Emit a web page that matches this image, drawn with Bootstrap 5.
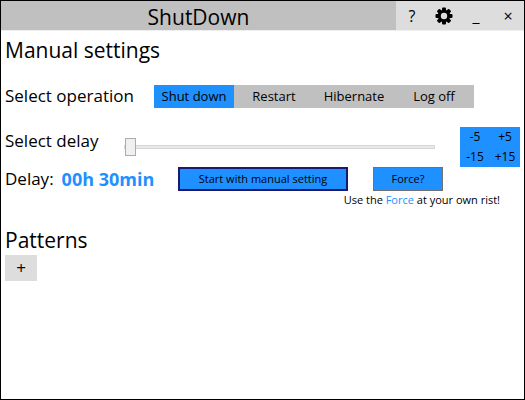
<!DOCTYPE html>
<html lang="en">
<head>
<meta charset="utf-8">
<meta name="viewport" content="width=device-width, initial-scale=1">
<title>ShutDown</title>
<link href="https://cdn.jsdelivr.net/npm/bootstrap@5.3.0/dist/css/bootstrap.min.css" rel="stylesheet">
<style>
  body { font-family: "Segoe UI", "Open Sans", "Noto Sans", sans-serif; color: #000; background: #fff; font-size: 11px; line-height: 18px; }
  .window { border: 1px solid #000; }
  .titlebar { background: #c0c0c0; height: 29px; box-shadow: 0 1px 0 #eee; }
  .titlebar h1 { font-size: 21px; line-height: 32px; }
  .chrome-btn { width: 32px; height: 29px; background: #ddd; border: 0; padding: 0; font-size: 16px; line-height: 30px; color: #000; }
  .chrome-btn svg { display: block; margin: 0 auto; }
  .section-title { font-size: 21px; line-height: 30px; }
  .field-label { font-size: 17px; line-height: 26px; white-space: nowrap; }
  .operations { width: 320px; }
  .operations .btn { --bs-btn-color: #000; flex: 1 1 0; border: 0; padding: 0; font-size: 13px; line-height: 23px; background: #c0c0c0; }
  .operations .btn-check:checked + .btn { background: #1e90ff; color: #000; }
  .delay-range { appearance: none; -webkit-appearance: none; height: 18px; background: transparent; margin: 11px 0 0; }
  .delay-range::-webkit-slider-runnable-track { height: 4px; background: #e7eaea; border: 1px solid #d6d6d6; }
  .delay-range::-webkit-slider-thumb { -webkit-appearance: none; width: 11px; height: 18px; margin-top: -8px; background: #f0f0f0; border: 1px solid #acacac; }
  .steps { width: 60px; display: grid; grid-template-columns: 1fr 1fr; background: #1e90ff; }
  .steps button { background: transparent; border: 0; padding: 0; height: 20px; font-size: 12px; line-height: 20px; color: #000; }
  .delay-value { color: #1e90ff; font-size: 18px; line-height: 28px; font-weight: 700; }
  .action { background: #1e90ff; border: 1px solid #707070; color: #000; font-size: 11px; line-height: 18px; height: 24px; padding: 0; width: 70px; }
  .action-main { width: 170px; border: 2px solid #191970; }
  .action-side, .steps-gap { margin-left: 25px; }
  .force-word { color: #1e90ff; }
  .add-btn { width: 32px; height: 26px; background: #ddd; border: 0; padding: 0; font-size: 17px; line-height: 26px; color: #000; }
  .lead-col { width: 149px; }
  .slide-col { width: 119px; line-height: 28px; }
  .value-col { width: 173px; height: 24px; }
  .op-row { margin: 18px 0 18px; }
  .inset { padding: 5px 4px 0; }
  .note { padding-right: 20px; }
</style>
</head>
<body>
<div class="window min-vh-100">
  <header class="titlebar d-flex">
    <h1 class="flex-fill text-center fw-normal m-0">ShutDown</h1>
    <button type="button" class="chrome-btn" aria-label="Help">?</button>
    <button type="button" class="chrome-btn" aria-label="Settings">
      <svg width="18" height="18" viewBox="-9 -9 18 18" aria-hidden="true">
        <g fill="#000">
          <rect x="-2" y="-8.5" width="4" height="17" rx="1"/>
          <rect x="-8.5" y="-2" width="17" height="4" rx="1"/>
          <rect x="-2" y="-8.5" width="4" height="17" rx="1" transform="rotate(45)"/>
          <rect x="-2" y="-8.5" width="4" height="17" rx="1" transform="rotate(-45)"/>
          <circle r="6.2"/>
        </g>
        <circle r="3.2" fill="#ddd"/>
      </svg>
    </button>
    <button type="button" class="chrome-btn" aria-label="Minimize">_</button>
    <button type="button" class="chrome-btn" aria-label="Close">×</button>
  </header>
  <main class="inset">
    <h2 class="section-title fw-normal m-0">Manual settings</h2>
    <div class="op-row d-flex align-items-center">
      <div class="field-label lead-col" id="op-label">Select operation</div>
      <div class="operations d-flex" role="group" aria-labelledby="op-label">
        <input class="btn-check" type="radio" name="op" id="op1" checked><label class="btn rounded-0" for="op1">Shut down</label>
        <input class="btn-check" type="radio" name="op" id="op2"><label class="btn rounded-0" for="op2">Restart</label>
        <input class="btn-check" type="radio" name="op" id="op3"><label class="btn rounded-0" for="op3">Hibernate</label>
        <input class="btn-check" type="radio" name="op" id="op4"><label class="btn rounded-0" for="op4">Log off</label>
      </div>
    </div>
    <div class="d-flex align-items-start">
      <label class="field-label slide-col" for="delay">Select delay</label>
      <input class="delay-range flex-fill" type="range" id="delay" min="0" max="1440" value="0">
      <div class="steps steps-gap">
        <button type="button">-5</button><button type="button">+5</button>
        <button type="button">-15</button><button type="button">+15</button>
      </div>
    </div>
    <div class="d-flex align-items-center">
      <div class="value-col d-flex align-items-center gap-2">
        <span class="field-label">Delay:</span>
        <output class="delay-value p-0" for="delay">00h 30min</output>
      </div>
      <button type="button" class="action action-main">Start with manual setting</button>
      <button type="button" class="action action-side">Force?</button>
    </div>
    <p class="note text-end m-0">Use the <span class="force-word">Force</span> at your own rist!</p>
    <h2 class="section-title fw-normal m-0 mt-3">Patterns</h2>
    <button type="button" class="add-btn" aria-label="Add pattern">+</button>
  </main>
</div>
<script src="https://cdn.jsdelivr.net/npm/bootstrap@5.3.0/dist/js/bootstrap.bundle.min.js"></script>
</body>
</html>
